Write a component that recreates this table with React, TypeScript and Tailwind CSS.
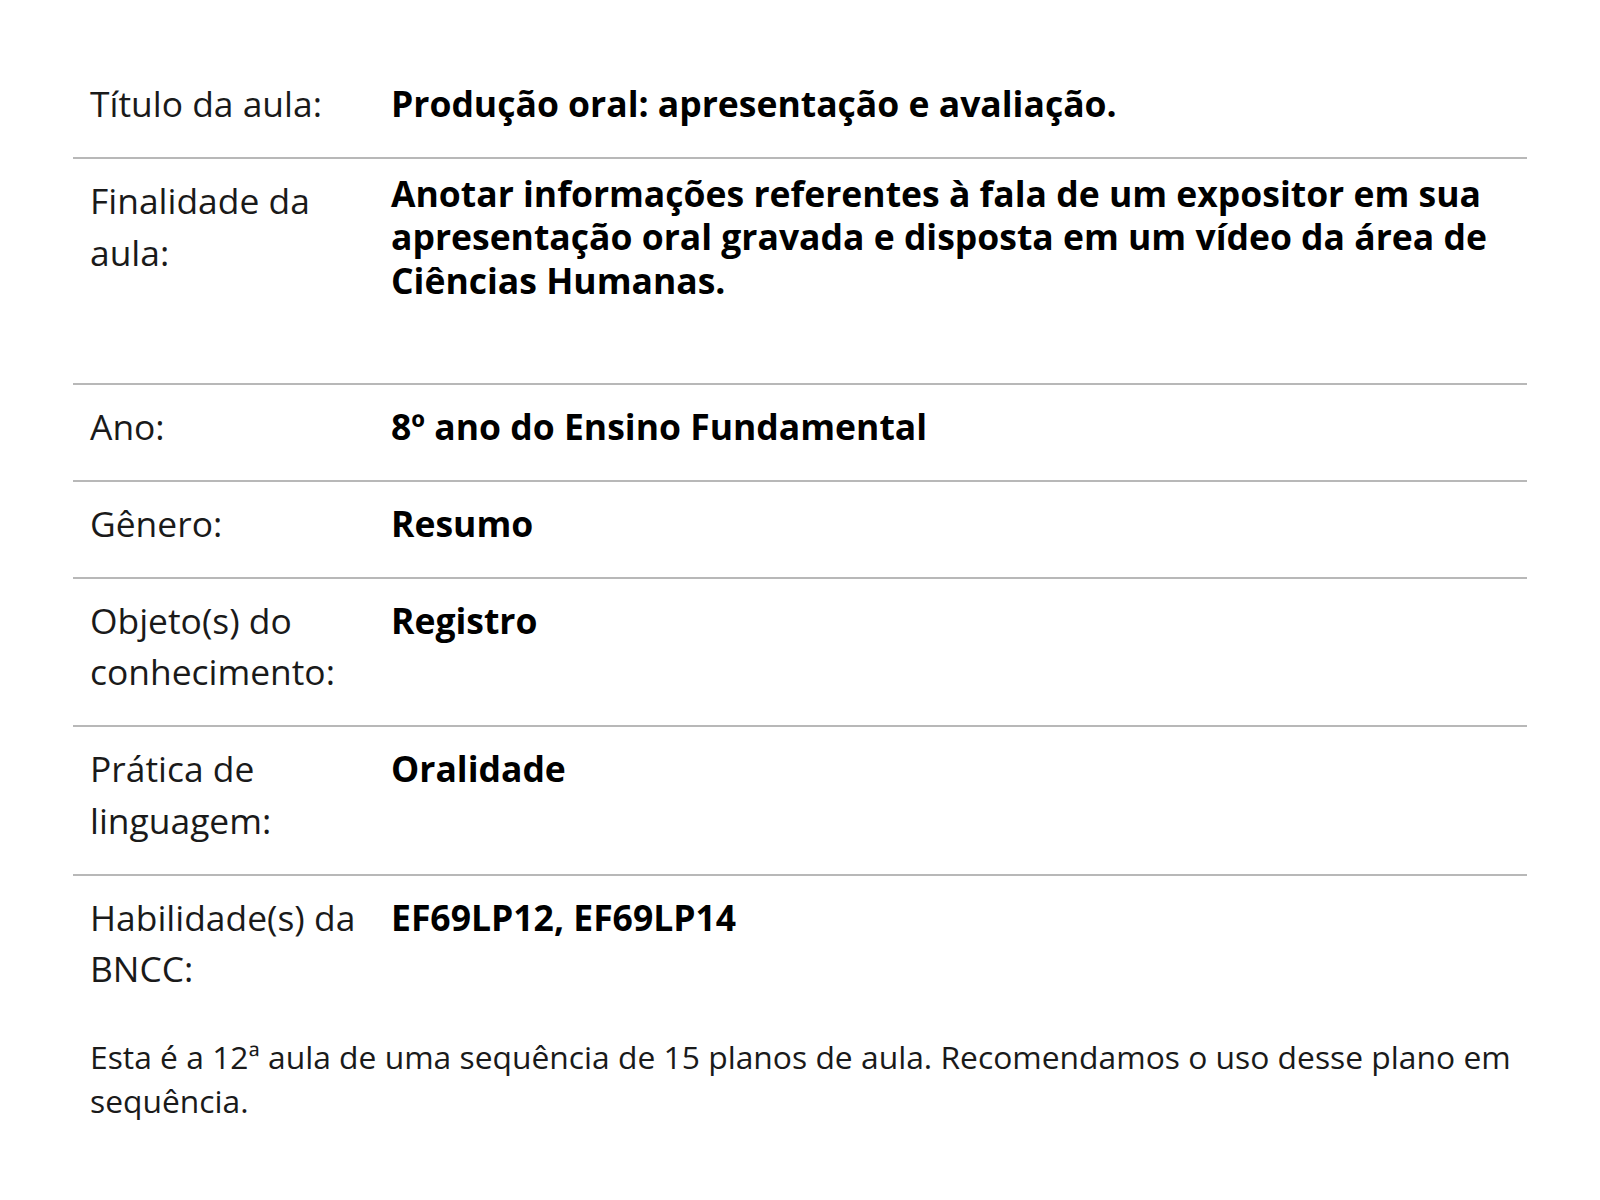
const rows = [
  { label: 'Título da aula:', value: 'Produção oral: apresentação e avaliação.' },
  {
    label: 'Finalidade da aula:',
    value:
      'Anotar informações referentes à fala de um expositor em sua apresentação oral gravada e disposta em um vídeo da área de Ciências Humanas.',
    long: true,
  },
  { label: 'Ano:', value: '8º ano do Ensino Fundamental' },
  { label: 'Gênero:', value: 'Resumo' },
  { label: 'Objeto(s) do conhecimento:', value: 'Registro' },
  { label: 'Prática de linguagem:', value: 'Oralidade' },
  { label: 'Habilidade(s) da BNCC:', value: 'EF69LP12, EF69LP14', last: true },
];

export default function App() {
  return (
    <div className="min-h-screen bg-white font-['Open_Sans',sans-serif] text-[#1a1a1a]">
      <div className="mx-[73px] pt-[62px]">
        {rows.map((row) => (
          <div
            key={row.label}
            className={`grid grid-cols-[301px_1fr] px-[17px] pt-[16px] pb-[27.5px] ${
              row.last ? '' : 'border-b-2 border-[#b8b8b8]'
            }`}
          >
            <div className="pr-3 text-[35.4px] leading-[51.5px]">{row.label}</div>
            {row.long ? (
              <div className="-mt-[3px] pb-[53px] text-[35.5px] font-bold leading-[43.4px] text-black">
                {row.value}
              </div>
            ) : (
              <div className="text-[35.5px] font-bold leading-[51.5px] text-black">{row.value}</div>
            )}
          </div>
        ))}
        <p className="mt-[13px] pl-[17px] text-[31.8px] leading-[44px]">
          Esta é a 12ª aula de uma sequência de 15 planos de aula. Recomendamos o uso desse plano em
          sequência.
        </p>
      </div>
    </div>
  );
}
